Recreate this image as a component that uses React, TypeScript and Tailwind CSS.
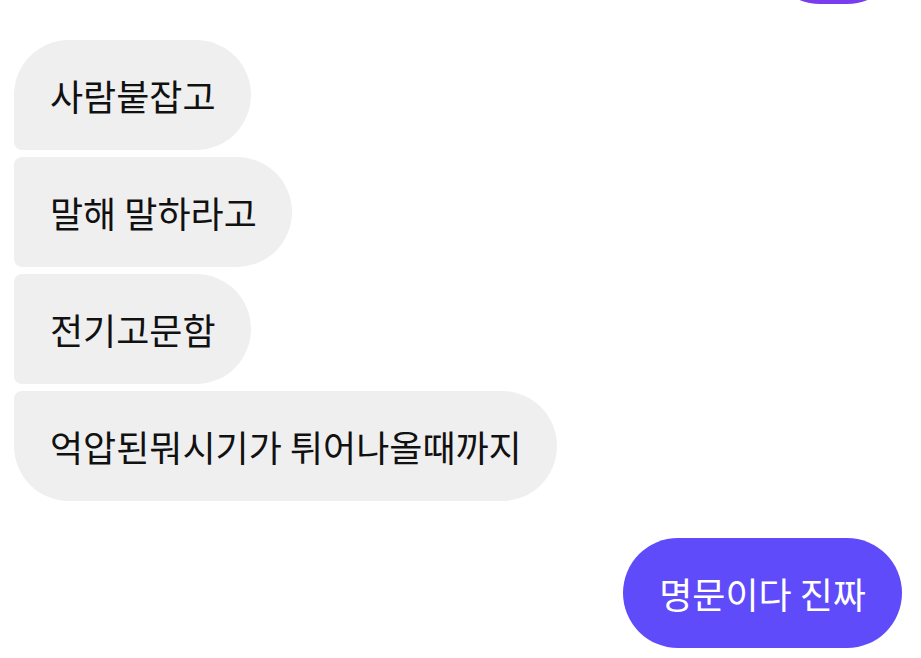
import React from 'react';

const received = [
  { text: '사람붙잡고', corner: 'rounded-l-[8px] rounded-tl-[55px]' },
  { text: '말해 말하라고', corner: 'rounded-l-[8px]' },
  { text: '전기고문함', corner: 'rounded-l-[8px]' },
  { text: '억압된뭐시기가 튀어나올때까지', corner: 'rounded-l-[8px] rounded-bl-[55px]' },
];

export default function App() {
  return (
    <div
      className="w-[921px] h-[658px] overflow-hidden bg-white"
      style={{ fontFamily: '"Noto Sans CJK KR", "Noto Sans", sans-serif' }}
    >
      <div className="flex flex-col pl-[14px] pr-[19px]">
        {/* earlier sent bubble, scrolled mostly off the top */}
        <div className="flex justify-end -mt-[106px]">
          <div className="h-[110px] w-[137px] rounded-full bg-[#7a3cf0]" />
        </div>

        <div className="mt-[36px] flex flex-col gap-[7px]">
          {received.map((m) => (
            <div key={m.text} className="flex">
              <div
                className={`flex h-[110px] items-center rounded-r-[55px] bg-[#efefef] pl-[36px] pr-[35px] text-[36px] leading-none text-[#111] ${m.corner}`}
              >
                {m.text}
              </div>
            </div>
          ))}
        </div>

        <div className="mt-[37px] flex justify-end">
          <div className="flex h-[110px] items-center rounded-full bg-[#5f4bfa] pl-[36px] pr-[36px] text-[36px] leading-none text-white">
            명문이다 진짜
          </div>
        </div>
      </div>
    </div>
  );
}
